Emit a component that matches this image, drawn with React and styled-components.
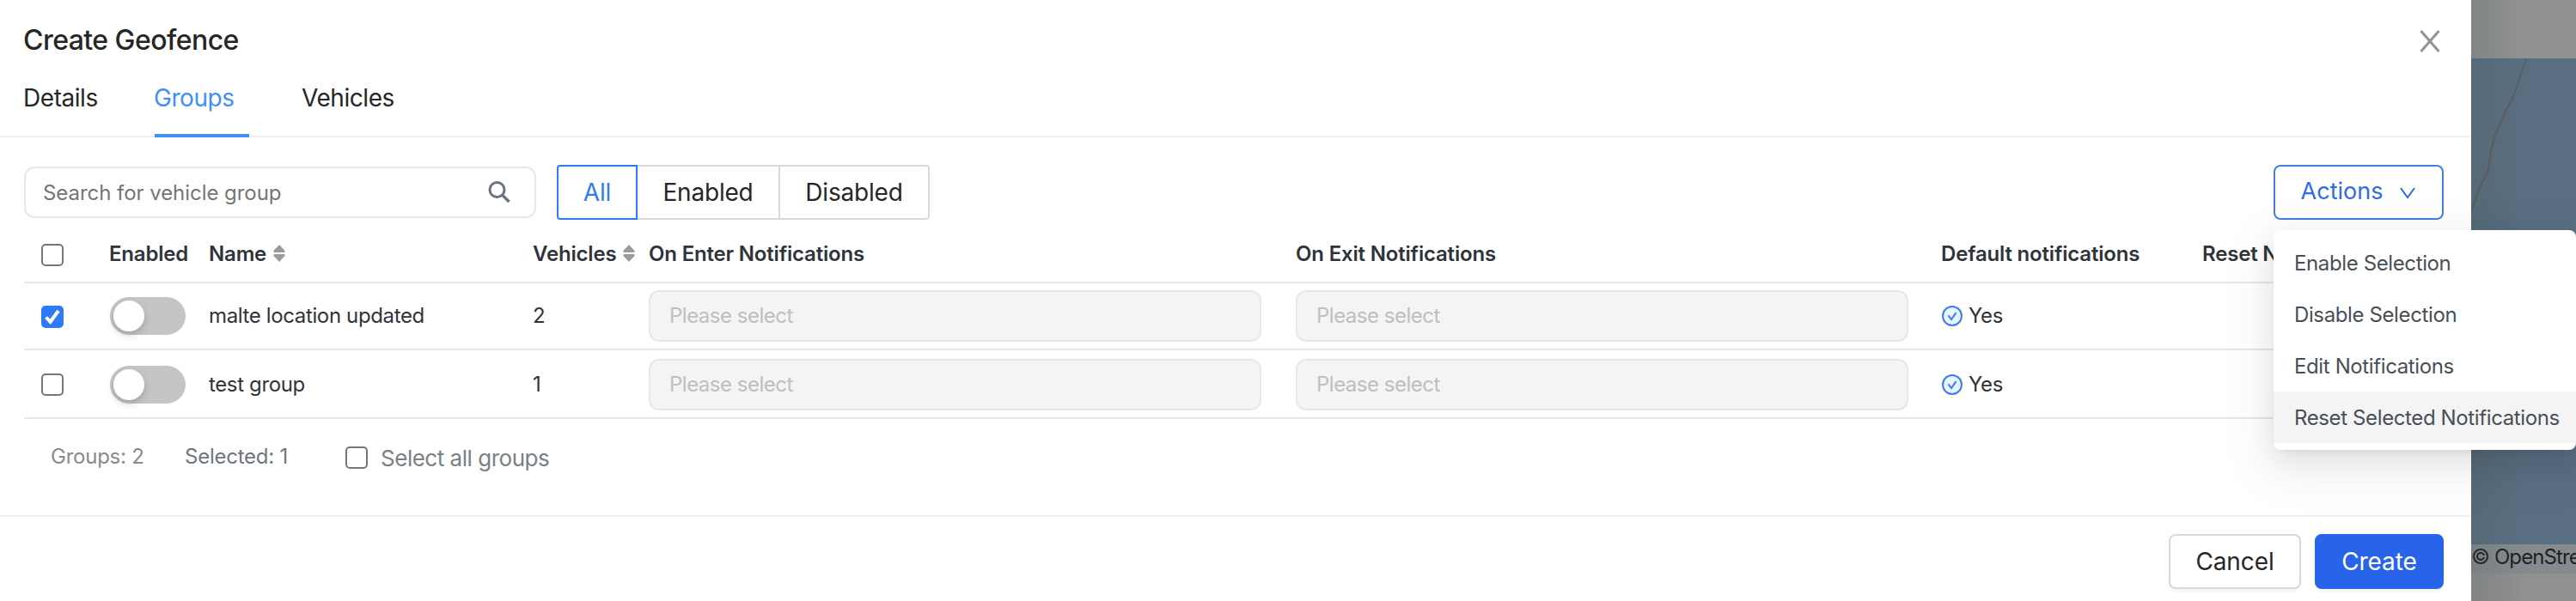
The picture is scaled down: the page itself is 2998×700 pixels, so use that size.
import React from "react";
import styled, { createGlobalStyle, css } from "styled-components";

const Global = createGlobalStyle`
  * { box-sizing: border-box; }
  body { margin: 0; font-family: Inter, "Liberation Sans", sans-serif; overflow: hidden; }
  button { font-family: inherit; margin: 0; }
`;

const Page = styled.div`
  position: relative;
  display: flex;
  width: 2998px;
  height: 700px;
  overflow: hidden;
`;

const Drawer = styled.main`
  width: 2876px;
  flex: none;
  height: 700px;
  background: #fff;
  display: flex;
  flex-direction: column;
`;

const Header = styled.header`
  display: flex;
  justify-content: space-between;
  align-items: center;
  height: 92px;
  padding: 4px 34px 0 27px;
`;

const Title = styled.h1`
  margin: 0 0 3px;
  font-size: 32px;
  line-height: 44px;
  font-weight: 500;
  letter-spacing: -0.55px;
  color: #262626;
`;

const Tabs = styled.nav`
  display: flex;
  height: 68px;
  padding-left: 28px;
  border-bottom: 2px solid #f0f0f0;
`;

const Tab = styled.div`
  width: ${(p) => p.$width}px;
  margin-right: ${(p) => p.$gap || 0}px;
  height: 68px;
  font-size: 28px;
  line-height: 44px;
  letter-spacing: -0.45px;
  text-indent: -1px;
  color: ${(p) => (p.$active ? "#4190f7" : "#262626")};
  border-bottom: 4px solid ${(p) => (p.$active ? "#4190f7" : "transparent")};
`;

const Toolbar = styled.div`
  display: flex;
  align-items: center;
  height: 64px;
  margin: 32px 32px 0 28px;
`;

const Search = styled.div`
  display: flex;
  align-items: center;
  justify-content: space-between;
  width: 596px;
  height: 60px;
  margin-right: 24px;
  padding: 0 28px 0 20px;
  border: 2px solid #e5e7eb;
  border-radius: 12px;
  font-size: 24px;
  letter-spacing: -0.05px;
  color: #757575;
`;

const Segments = styled.div`
  display: flex;
  height: 64px;
`;

const Segment = styled.div`
  width: ${(p) => p.$width}px;
  display: flex;
  align-items: center;
  justify-content: center;
  border: 2px solid #d9d9d9;
  border-left-width: 0;
  font-size: 28px;
  letter-spacing: -0.2px;
  color: #262626;
  &:last-child { border-radius: 0 4px 4px 0; }
  ${(p) => p.$active && css`
    border: 2px solid #2f7bf6;
    border-radius: 4px 0 0 4px;
    color: #2f7bf6;
  `}
`;

const Button = styled.button`
  display: flex;
  align-items: center;
  justify-content: center;
  width: ${(p) => p.$width}px;
  height: 64px;
  padding: 0;
  border: 2px solid ${(p) => p.$border};
  border-radius: 8px;
  background: ${(p) => p.$bg || "#fff"};
  color: ${(p) => p.$color};
  font-size: 28px;
  letter-spacing: -0.1px;
  box-shadow: 0 4px 0 rgba(0, 0, 0, 0.03);
`;

const ActionsButton = styled(Button)`
  margin-left: auto;
  gap: 19px;
  font-size: 27px;
  letter-spacing: 0;
  box-shadow: none;
`;

const ActionsLabel = styled.span`
  padding-bottom: 3px;
`;

const Row = styled.div`
  display: grid;
  grid-template-columns: 99px 116px 377px 135px 753px 751px 304px 1fr;
  align-items: center;
  height: ${(p) => p.$height}px;
  margin: 0 32px 0 28px;
  padding-top: ${(p) => p.$offset || 0}px;
  border-bottom: 2px solid #e5e7eb;
  font-size: 24px;
  letter-spacing: ${(p) => (p.$head ? "-0.18px" : "-0.37px")};
  color: #2f343c;
  font-weight: ${(p) => (p.$head ? 600 : 400)};
`;

const CheckCell = styled.div`
  padding: ${(p) => p.$drop || 0}px 0 0 20px;
  display: flex;
`;

const Box = styled.span`
  display: flex;
  align-items: center;
  justify-content: center;
  flex: none;
  width: 26px;
  height: 26px;
  border: 2px solid ${(p) => (p.$checked ? "#2f7bf6" : "#767676")};
  background: ${(p) => (p.$checked ? "#2f7bf6" : "#fff")};
  border-radius: 5px;
`;

const HeadCell = styled.div`
  display: flex;
  align-items: center;
  gap: 8px;
  white-space: nowrap;
`;

const Value = styled.span`
  padding-bottom: 2px;
`;

const Switch = styled.div`
  width: 88px;
  height: 44px;
  margin-left: 1px;
  padding: 4px;
  border-radius: 22px;
  background: #c5c5c5;
`;

const Knob = styled.div`
  width: 36px;
  height: 36px;
  border-radius: 50%;
  background: #fff;
  box-shadow: 0 4px 8px rgba(0, 35, 11, 0.2);
`;

const Select = styled.div`
  display: flex;
  align-items: center;
  width: 713px;
  height: 60px;
  padding: 0 0 2px 22px;
  border: 2px solid #e5e7eb;
  border-radius: 12px;
  background: #f4f4f4;
  letter-spacing: -0.5px;
  color: #bfbfbf;
`;

const YesCell = styled.div`
  display: flex;
  align-items: center;
  gap: 7px;
  padding-left: 1px;
`;

const Summary = styled.div`
  display: flex;
  align-items: center;
  height: 112px;
  padding: 0 0 22px 59px;
  font-size: 24px;
  letter-spacing: -0.25px;
  color: #7b8087;
`;

const SummaryItem = styled.span`
  width: ${(p) => p.$width}px;
  padding-bottom: 3px;
  color: ${(p) => p.$color};
`;

const SelectAll = styled.label`
  display: flex;
  align-items: center;
  gap: 15px;
  font-size: 26px;
  letter-spacing: -0.48px;
`;

const Footer = styled.footer`
  display: flex;
  justify-content: flex-end;
  gap: 16px;
  height: 100px;
  padding: 20px 32px 0 0;
  border-top: 2px solid #f0f0f0;
`;

const MapStrip = styled.aside`
  position: relative;
  flex: 1;
  display: flex;
  flex-direction: column;
  background: #8f9090;
  overflow: hidden;
  &::after {
    content: "";
    position: absolute;
    inset: 0;
    background: linear-gradient(90deg, rgba(70, 85, 70, 0.2), rgba(70, 85, 70, 0) 60px);
  }
`;

const MapTop = styled.div`
  height: 68px;
  background: #909193;
`;

const MapArea = styled.div`
  height: 566px;
  background: #5a6e82;
`;

const Attribution = styled.div`
  height: 34px;
  background: #868a90;
  color: #1e1f20;
  font-size: 24px;
  line-height: 30px;
  letter-spacing: -0.9px;
  white-space: nowrap;
`;

const Menu = styled.div`
  position: absolute;
  left: 2646px;
  top: 268px;
  width: 352px;
  height: 256px;
  padding: 8px 0;
  border-radius: 8px;
  background: #fff;
  box-shadow: 0 6px 12px -8px rgba(0, 0, 0, 0.12), 0 12px 32px rgba(0, 0, 0, 0.08), 0 18px 56px 16px rgba(0, 0, 0, 0.05);
`;

const MenuItem = styled.div`
  height: 60px;
  padding-left: 24px;
  line-height: 62px;
  font-size: 24px;
  letter-spacing: -0.38px;
  white-space: nowrap;
  color: #484f57;
  background: ${(p) => (p.$active ? "#f4f4f4" : "transparent")};
`;

const SortIcon = () => (
  <svg width="14" height="20" viewBox="0 0 14 20" fill="#9b9b9b">
    <path d="M7 0 L13.6 7 Q14 9 12.5 9 H1.5 Q0 9 0.4 7 Z" />
    <path d="M7 20 L13.6 13 Q14 11 12.5 11 H1.5 Q0 11 0.4 13 Z" />
  </svg>
);

const CheckCircle = () => (
  <svg width="24" height="24" viewBox="0 0 24 24" fill="none" stroke="#3f7cf2">
    <circle cx="12" cy="12" r="11" fill="#e6f4ff" strokeWidth="2" />
    <path d="M7.4 11.4 L11 16 L16.6 8.2" strokeWidth="2" />
  </svg>
);

const groups = [
  { name: "malte location updated", vehicles: 2, checked: true, height: 78, offset: 0, drop: 2 },
  { name: "test group", vehicles: 1, checked: false, height: 80, offset: 2, drop: 0 },
];

const Checkbox = ({ checked }) => (
  <Box $checked={checked}>
    {checked && (
      <svg width="22" height="22" viewBox="0 0 22 22" fill="none" stroke="#fff" strokeWidth="4">
        <path d="M3.6 11.5 L8.6 16.8 L18 4" />
      </svg>
    )}
  </Box>
);

export default function App() {
  return (
    <Page>
      <Global />
      <Drawer>
        <Header>
          <Title>Create Geofence</Title>
          <svg width="28" height="28" viewBox="0 0 28 28" stroke="#929292" strokeWidth="3">
            <path d="M3.5 2 L24.5 26 M24.5 2 L3.5 26" />
          </svg>
        </Header>
        <Tabs>
          <Tab $width={88} $gap={64}>Details</Tab>
          <Tab $width={110} $gap={62} $active>Groups</Tab>
          <Tab $width={120}>Vehicles</Tab>
        </Tabs>
        <Toolbar>
          <Search>
            Search for vehicle group
            <svg width="26" height="26" viewBox="0 0 26 26" fill="none" stroke="#6b7280" strokeWidth="3">
              <circle cx="10.5" cy="10" r="8.5" />
              <path d="M16.5 16 L24.5 24" strokeWidth="3.4" />
            </svg>
          </Search>
          <Segments>
            <Segment $width={94} $active>All</Segment>
            <Segment $width={166}>Enabled</Segment>
            <Segment $width={174}>Disabled</Segment>
          </Segments>
          <ActionsButton $width={198} $border="#457be8" $color="#2f6bea">
            <ActionsLabel>Actions</ActionsLabel>
            <svg width="20" height="16" viewBox="0 0 20 16" fill="none" stroke="#2f6bea" strokeWidth="2">
              <path d="M2 3 L10 14 L18 3" />
            </svg>
          </ActionsButton>
        </Toolbar>
        <Row $height={74} $offset={6} $head>
          <CheckCell $drop={4}><Checkbox /></CheckCell>
          <HeadCell>Enabled</HeadCell>
          <HeadCell>Name<SortIcon /></HeadCell>
          <HeadCell>Vehicles<SortIcon /></HeadCell>
          <HeadCell>On Enter Notifications</HeadCell>
          <HeadCell>On Exit Notifications</HeadCell>
          <HeadCell>Default notifications</HeadCell>
          <HeadCell>Reset N</HeadCell>
        </Row>
        {groups.map((g) => (
          <Row key={g.name} $height={g.height} $offset={g.offset}>
            <CheckCell $drop={g.drop}><Checkbox checked={g.checked} /></CheckCell>
            <Switch><Knob /></Switch>
            <Value>{g.name}</Value>
            <Value>{g.vehicles}</Value>
            <Select>Please select</Select>
            <Select>Please select</Select>
            <YesCell><CheckCircle /><Value>Yes</Value></YesCell>
            <span />
          </Row>
        ))}
        <Summary>
          <SummaryItem $width={156} $color="#8a8a8a">Groups: 2</SummaryItem>
          <SummaryItem $width={187} $color="#6f7680">Selected: 1</SummaryItem>
          <SelectAll><Checkbox />Select all groups</SelectAll>
        </Summary>
        <Footer>
          <Button $width={154} $border="#d9d9d9" $color="#262626">Cancel</Button>
          <Button $width={150} $border="#2864e9" $bg="#2864e9" $color="#fff">Create</Button>
        </Footer>
      </Drawer>
      <MapStrip>
        <MapTop />
        <MapArea>
          <svg width="122" height="200" viewBox="0 0 122 200" fill="none" stroke="#5e5d5c" strokeWidth="2">
            <path d="M64 0 L56 24 L50 42 L40 62 L29 86 L23 108 L20 130 L13 144 L6 160 L0 180" />
          </svg>
        </MapArea>
        <Attribution>© OpenStreetMap</Attribution>
      </MapStrip>
      <Menu>
        <MenuItem>Enable Selection</MenuItem>
        <MenuItem>Disable Selection</MenuItem>
        <MenuItem>Edit Notifications</MenuItem>
        <MenuItem $active>Reset Selected Notifications</MenuItem>
      </Menu>
    </Page>
  );
}
